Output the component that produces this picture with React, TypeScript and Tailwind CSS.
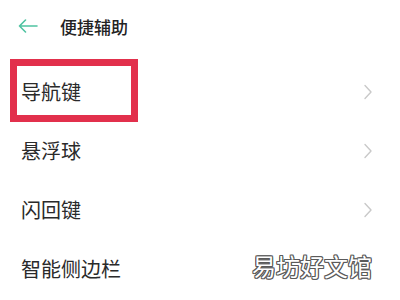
import React from "react";

const items = ["导航键", "悬浮球", "闪回键", "智能侧边栏"];

function Chevron() {
  return (
    <svg width="10" height="16" viewBox="0 0 10 16" fill="none">
      <path d="M2 1.5 L8 8 L2 14.5" stroke="#c9c9c9" strokeWidth="1.4" strokeLinecap="round" strokeLinejoin="round" />
    </svg>
  );
}

const outline =
  "1px 0 #5a5a5a, -1px 0 #5a5a5a, 0 1px #5a5a5a, 0 -1px #5a5a5a, 1px 1px #5a5a5a, -1px -1px #5a5a5a, 1px -1px #5a5a5a, -1px 1px #5a5a5a";

export default function App() {
  return (
    <div
      className="relative w-[400px] h-[300px] overflow-hidden bg-white text-[#222]"
      style={{ fontFamily: '"Noto Sans CJK SC", "Noto Sans", sans-serif' }}
    >
      <div className="h-[52px] flex items-center pl-[18px]">
        <svg width="20" height="14" viewBox="0 0 20 14" fill="none">
          <path d="M1.5 7 H19 M7.5 1 L1.5 7 L7.5 13" stroke="#4fc3a1" strokeWidth="1.6" strokeLinecap="round" strokeLinejoin="round" />
        </svg>
        <span className="ml-[22px] text-[17px] font-medium leading-none text-[#222]">便捷辅助</span>
      </div>
      <div className="pt-[10px]">
        {items.map((t, i) => (
          <div key={t} className="h-[59px] flex items-center justify-between pl-[21px] pr-[27px]">
            <span className="text-[20px] leading-none text-[#2a2a2a]">{t}</span>
            {i < 3 && <Chevron />}
          </div>
        ))}
      </div>
      <div className="absolute left-[10px] top-[59px] w-[128px] h-[63px] border-[7px] border-[#e2304c]" />
      <div
        className="absolute left-[252px] top-[254px] text-[24px] leading-none text-white font-normal"
        style={{ textShadow: outline }}
      >
        易坊好文馆
      </div>
    </div>
  );
}
